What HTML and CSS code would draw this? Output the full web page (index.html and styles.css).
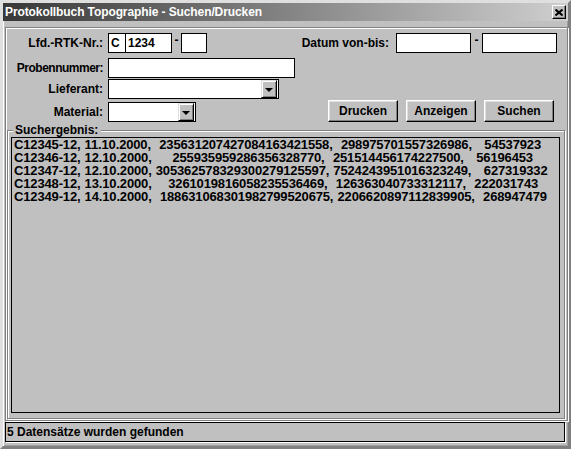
FILE: index.html
```html
<!DOCTYPE html>
<html lang="de">
<head>
<meta charset="utf-8">
<title>Protokollbuch Topographie - Suchen/Drucken</title>
<link rel="stylesheet" href="styles.css">
</head>
<body>
<div class="window">
  <div class="titlebar">
    <span class="title">Protokollbuch Topographie - Suchen/Drucken</span>
    <span class="close"><svg width="8" height="7" viewBox="0 0 8 7"><path d="M0.5 0.5 L7.5 6.5 M7.5 0.5 L0.5 6.5" stroke="#000" stroke-width="2" fill="none"/></svg></span>
  </div>
  <div class="client">
    <div class="frame">
      <div class="form">
        <div class="left">
          <div class="row row1">
            <span class="label">Lfd.-RTK-Nr.:</span>
            <span class="input w-c">C</span>
            <span class="input w-nr">1234</span>
            <span class="dash">-</span>
            <span class="input w-suf"></span>
          </div>
          <div class="row row2">
            <span class="label tight">Probennummer:</span>
            <span class="input w-probe"></span>
          </div>
          <div class="row row3">
            <span class="label">Lieferant:</span>
            <span class="combo w-lief"><span class="combo-text"></span><span class="combo-btn"><span class="tri"></span></span></span>
          </div>
          <div class="row row4">
            <span class="label">Material:</span>
            <span class="combo w-mat"><span class="combo-text"></span><span class="combo-btn"><span class="tri"></span></span></span>
          </div>
        </div>
        <div class="right">
          <div class="datum">
            <span class="label-d">Datum von-bis:</span>
            <span class="input w-date"></span>
            <span class="dash dash-d">-</span>
            <span class="input w-date"></span>
          </div>
          <div class="buttons">
            <span class="btn">Drucken</span>
            <span class="btn">Anzeigen</span>
            <span class="btn">Suchen</span>
          </div>
        </div>
      </div>
      <div class="group">
        <span class="legend">Suchergebnis:</span>
        <div class="list">C12345-12, 11.10.2000,  235631207427084163421558,  298975701557326986,   54537923
C12346-12, 12.10.2000,     255935959286356328770,  251514456174227500,   56196453
C12347-12, 12.10.2000, 305362578329300279125597, 7524243951016323249,   627319332
C12348-12, 13.10.2000,    3261019816058235536469,  126363040733312117,  222031743
C12349-12, 14.10.2000,  188631068301982799520675, 2206620897112839905,  268947479</div>
      </div>
    </div>
    <div class="status">5 Datensätze wurden gefunden</div>
  </div>
</div>
</body>
</html>
```

FILE: styles.css
```css
html, body {
  margin: 0;
  padding: 0;
  background: #c0c0c0;
}
body {
  font-family: "Liberation Sans", Arial, sans-serif;
  font-size: 12px;
  font-weight: bold;
  color: #000;
}
.window {
  box-sizing: border-box;
  width: 571px;
  height: 449px;
  display: flex;
  flex-direction: column;
  background: #c0c0c0;
  border-top: 3px solid #dfdfdf;
  border-left: 3px solid #dfdfdf;
  border-right: 3px solid #808080;
  border-bottom: 3px solid #808080;
  box-shadow: inset 1px 1px #ffffff, inset -1px -1px #a0a0a0;
}
.titlebar {
  height: 18px;
  flex: none;
  display: flex;
  align-items: center;
  padding-left: 2px;
  padding-right: 2px;
  background: linear-gradient(to right, #383838, #cfcfcf);
}
.title {
  color: #fff;
  flex: 1;
  line-height: 18px;
  letter-spacing: -0.1px;
}
.close {
  box-sizing: border-box;
  width: 14px;
  height: 14px;
  display: flex;
  align-items: center;
  justify-content: center;
  background: #c0c0c0;
  border-top: 1px solid #fff;
  border-left: 1px solid #fff;
  border-right: 1px solid #000;
  border-bottom: 1px solid #000;
  box-shadow: inset -1px -1px #808080;
}
.client {
  flex: 1;
  display: flex;
  flex-direction: column;
  padding: 6px 0 4px 2px;
}
.frame {
  flex: 1;
  display: flex;
  flex-direction: column;
  border: 1px solid #808080;
  box-shadow: inset 1px 1px #fff, 1px 1px #fff;
}
.form {
  display: flex;
  padding-top: 5px;
}
.left {
  display: flex;
  flex-direction: column;
  padding-left: 2px;
}
.row {
  display: flex;
  align-items: center;
  height: 20px;
}
.row2 { margin-top: 5px; }
.row3 { margin-top: 1px; }
.row4 { margin-top: 3px; }
.label {
  width: 95px;
  margin-right: 5px;
  text-align: right;
  white-space: nowrap;
}
.tight { letter-spacing: -0.5px; }
.input {
  box-sizing: border-box;
  height: 20px;
  background: #fff;
  border: 1px solid #000;
  padding: 1px 2px 0 2px;
  line-height: 16px;
  white-space: pre;
}
.w-c { width: 18px; }
.w-nr { width: 47px; margin-left: -1px; }
.w-suf { width: 26px; }
.w-probe { width: 187px; }
.w-date { width: 75px; }
.dash {
  width: 9px;
  text-align: center;
  align-self: flex-start;
  line-height: 14px;
}
.dash-d { width: 11px; }
.combo {
  box-sizing: border-box;
  height: 20px;
  display: flex;
  background: #fff;
  border: 1px solid #000;
  padding: 0 0 1px 0;
}
.w-lief { width: 171px; }
.w-mat { width: 88px; }
.combo-text { flex: 1; }
.combo-btn {
  box-sizing: border-box;
  width: 16px;
  height: 18px;
  margin: 0 1px 0 0;
  display: flex;
  align-items: center;
  justify-content: center;
  background: #c0c0c0;
  border-top: 1px solid #dfdfdf;
  border-left: 1px solid #dfdfdf;
  border-right: 1px solid #000;
  border-bottom: 1px solid #000;
  box-shadow: inset 1px 1px #fff, inset -1px -1px #808080;
}
.tri {
  width: 0;
  height: 0;
  border-left: 4px solid transparent;
  border-right: 4px solid transparent;
  border-top: 4px solid #000;
  margin-top: 1px;
}
.right {
  margin-left: auto;
  margin-right: 10px;
  display: flex;
  flex-direction: column;
  justify-content: space-between;
  align-items: flex-end;
}
.datum {
  display: flex;
  align-items: center;
  height: 20px;
}
.label-d {
  margin-right: 7px;
}
.buttons {
  display: flex;
  gap: 8px;
  margin-right: 3px;
}
.btn {
  box-sizing: border-box;
  width: 70px;
  height: 22px;
  display: flex;
  align-items: center;
  justify-content: center;
  background: #c0c0c0;
  border-top: 1px solid #fff;
  border-left: 1px solid #fff;
  border-right: 1px solid #000;
  border-bottom: 1px solid #000;
  box-shadow: inset -1px -1px #808080, inset 1px 1px #dfdfdf;
}
.group {
  position: relative;
  flex: 1;
  display: flex;
  flex-direction: column;
  margin: 8px 2px 1px 1px;
  padding: 6px 4px 5px 3px;
  border: 1px solid #808080;
  box-shadow: inset 1px 1px #fff, 1px 1px #fff;
}
.legend {
  position: absolute;
  left: 5px;
  top: -8px;
  padding: 0 3px 0 2px;
  background: #c0c0c0;
  line-height: 14px;
}
.list {
  flex: 1;
  border: 1px solid #000;
  background: #c0c0c0;
  padding: 0 0 0 2px;
  font-size: 13px;
  letter-spacing: -0.15px;
  word-spacing: 0.7px;
  line-height: 13px;
  white-space: pre;
  overflow: hidden;
}
.status {
  box-sizing: border-box;
  height: 20px;
  margin-top: 1px;
  margin-right: 3px;
  border: 1px solid #000;
  padding-left: 1px;
  line-height: 18px;
  box-shadow: 1px 1px #fff;
}
```
